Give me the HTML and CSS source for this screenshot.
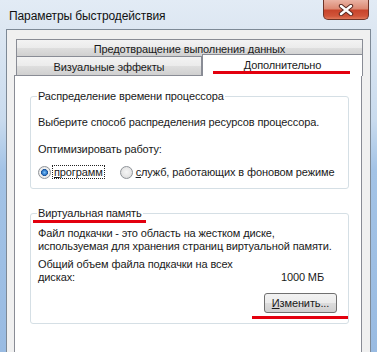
FILE: index.html
```html
<html>
<head>
    <link rel="stylesheet" href="styles.css">
</head>

<body>
    <div class="window">
        <div class="titlebar">
            <span class="title">Параметры быстродействия</span>
            <span class="close">
                <svg width="16" height="12" viewBox="0 0 16 12">
                    <path d="M3 2 L13 10 M13 2 L3 10" stroke="#5a2a22" stroke-width="4.4" stroke-linecap="round"/>
                    <path d="M3 2 L13 10 M13 2 L3 10" stroke="#ffffff" stroke-width="2.4" stroke-linecap="round"/>
                </svg>
            </span>
        </div>

        <div class="client">
            <div class="tab tab-top">Предотвращение выполнения данных</div>
            <div class="tabrow">
                <div class="tab tab-visual">Визуальные эффекты</div>
                <div class="tab tab-active">Дополнительно<span class="mark mark-tab"></span></div>
            </div>

            <div class="panel">
                <fieldset class="group group-cpu">
                    <legend>Распределение времени процессора</legend>
                    <p>Выберите способ распределения ресурсов процессора.</p>
                    <p class="gap-opt">Оптимизировать работу:</p>
                    <div class="radios">
                        <span class="radio checked"></span>
                        <span class="focus"><u>п</u>рограмм</span>
                        <span class="radio radio-second"></span>
                        <span class="label"><u>с</u>лужб, работающих в фоновом режиме</span>
                    </div>
                </fieldset>

                <fieldset class="group group-mem">
                    <legend>Виртуальная память<span class="mark mark-legend"></span></legend>
                    <p>Файл подкачки - это область на жестком диске,<br>используемая для хранения страниц виртуальной памяти.</p>
                    <p class="gap-total">Общий объем файла подкачки на всех</p>
                    <div class="total">
                        <span>дисках:</span>
                        <span class="size">1000 МБ</span>
                    </div>
                    <div class="actions">
                        <span class="btn-wrap">
                            <button class="btn"><u>И</u>зменить...</button>
                            <span class="mark mark-btn"></span>
                        </span>
                    </div>
                </fieldset>
            </div>
        </div>
    </div>
</body>
</html>
```

FILE: styles.css
```css
body{
    margin: 0;
    padding: 0;
    width: 377px;
    height: 352px;
    overflow: hidden;
    font-family: "Liberation Sans", Arial, sans-serif;
    font-size: 11px;
    letter-spacing: -0.12px;
    color: #1a1a1a;
    background: linear-gradient(#e2ebf5 0px, #dde7f2 29px, #c9dbee 120px, #a3c3e6 170px, #99bbe2 352px);
}
.window{
    display: flex;
    flex-direction: column;
    height: 352px;
    padding: 0 6px;
    box-sizing: border-box;
}
.titlebar{
    height: 29px;
    display: flex;
    align-items: flex-start;
    flex-shrink: 0;
}
.title{
    padding: 9px 0 0 3px;
    font-size: 12px;
    line-height: 14px;
    letter-spacing: -0.1px;
    color: #111;
}
.close{
    margin-left: auto;
    margin-right: 2px;
    width: 46px;
    height: 20px;
    box-sizing: border-box;
    border: 1px solid #6e3428;
    border-top: none;
    border-radius: 0 0 5px 5px;
    background: linear-gradient(#eab3a4 0%, #dc8a74 45%, #c8452c 55%, #d1553a 85%, #e07a5c 100%);
    display: flex;
    align-items: center;
    justify-content: center;
}
.client{
    flex: 1;
    display: flex;
    flex-direction: column;
    border: 1px solid #7d8996;
    border-bottom: none;
    background: #f0f0f0;
    padding: 9px 8px 0 7px;
}
.tab{
    box-sizing: border-box;
    border: 1px solid #898c95;
    border-bottom: none;
    background: linear-gradient(#f3f3f3 0%, #ebebeb 50%, #dedede 50%, #d0d0d0 100%);
    text-align: center;
    line-height: 14px;
    white-space: nowrap;
}
.tab-top{
    height: 17px;
    margin: 0 -1px 0 2px;
    padding-top: 2px;
}
.tabrow{
    display: flex;
    height: 19px;
}
.tab-visual{
    width: 186px;
    height: 19px;
    margin-left: 2px;
    padding-top: 3px;
}
.tab-active{
    position: relative;
    z-index: 1;
    width: 161px;
    height: 22px;
    margin: -2px -1px -1px 0;
    padding-top: 3px;
    background: #fff;
}
.mark{
    position: absolute;
    height: 3px;
    background: #e3000e;
}
.mark-tab{
    left: 10px;
    top: 16px;
    width: 137px;
}
.panel{
    flex: 1;
    border: 1px solid #898c95;
    border-bottom: none;
    background: #fff;
    padding: 13px 12px 0 15px;
}
.group{
    margin: 0;
    padding: 0 11px 0 7px;
    width: 319px;
    box-sizing: border-box;
    border: 1px solid #d5dfe5;
    border-radius: 3px;
}
.group legend{
    position: relative;
    padding: 0 1px;
    margin-left: -1px;
    line-height: 14px;
    white-space: nowrap;
}
.group p{
    margin: 0;
    line-height: 13px;
    white-space: nowrap;
}
.group-cpu{
    padding-top: 13px;
    padding-bottom: 9px;
}
.gap-opt{
    margin-top: 14px !important;
}
.radios{
    display: flex;
    align-items: center;
    height: 14px;
    margin-top: 9px;
    white-space: nowrap;
}
.radio{
    flex-shrink: 0;
    width: 13px;
    height: 13px;
    box-sizing: border-box;
    border-radius: 50%;
    border: 1px solid #8f9499;
    background: radial-gradient(circle at 50% 45%, #f6f6f6 0%, #e6e6e6 55%, #cfcfcf 100%);
}
.radio.checked{
    background: radial-gradient(circle at 50% 50%, #7cc1f7 0%, #2a74c6 32%, #1b4f91 42%, #f2f2f2 48%, #dedede 100%);
}
.focus{
    margin-left: 1px;
    padding: 0 1px;
    height: 14px;
    line-height: 12px;
    box-sizing: border-box;
    border: 1px dotted #222;
}
.radio-second{
    margin-left: 15px;
}
.label{
    margin-left: 3px;
}
.group-mem{
    margin-top: 17px;
    padding-top: 7px;
    padding-bottom: 10px;
}
.mark-legend{
    left: -4px;
    right: -3px;
    top: 100%;
}
.gap-total{
    margin-top: 5px !important;
}
.total{
    display: flex;
    justify-content: space-between;
    line-height: 13px;
}
.size{
    margin-right: 13px;
}
.actions{
    display: flex;
    justify-content: flex-end;
    margin-top: 9px;
}
.btn-wrap{
    position: relative;
    display: flex;
}
.btn{
    width: 73px;
    height: 20px;
    padding: 0;
    font-family: "Liberation Sans", Arial, sans-serif;
    font-size: 11px;
    letter-spacing: -0.12px;
    color: #1a1a1a;
    border: 1px solid #707070;
    border-radius: 3px;
    background: linear-gradient(#f2f2f2 0%, #ebebeb 50%, #dddddd 50%, #cfcfcf 100%);
}
.mark-btn{
    left: -12px;
    right: -11px;
    top: 23px;
}
```
